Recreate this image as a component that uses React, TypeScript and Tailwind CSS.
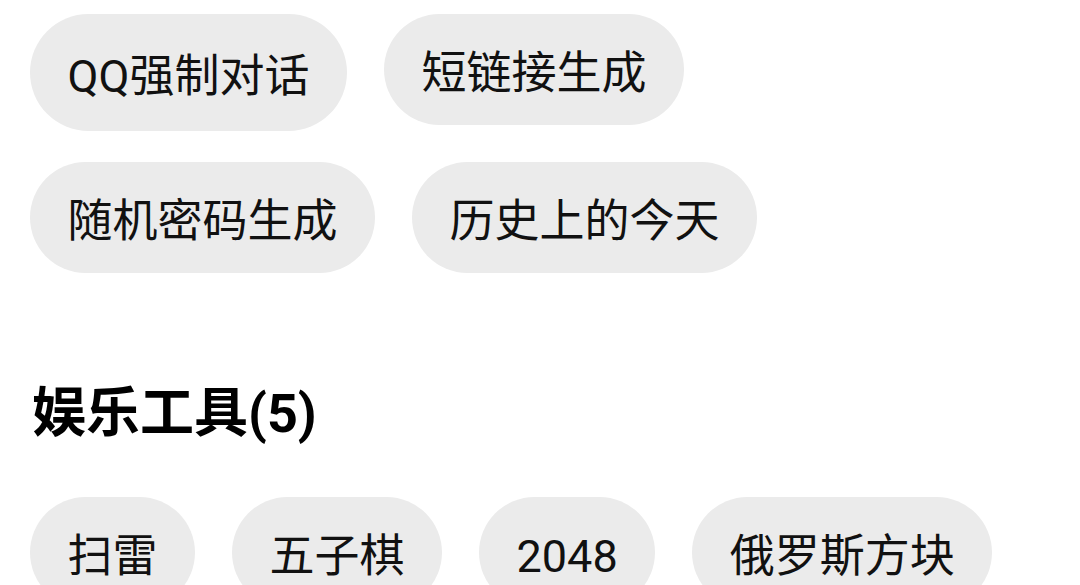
import React from "react";

const font = { fontFamily: "Roboto, 'Noto Sans CJK SC', sans-serif" };

function Pill({ label, tall }: { label: string; tall?: boolean }) {
  return (
    <div
      className={`flex items-center rounded-full bg-[#ebebeb] px-[37.5px] pt-[8px] text-[45px] leading-none text-[#111111] whitespace-nowrap ${
        tall ? "h-[117px]" : "h-[111px]"
      }`}
    >
      {label}
    </div>
  );
}

export default function App() {
  return (
    <div
      className="w-[1080px] h-[585px] overflow-hidden bg-white pl-[30px] pt-[14px]"
      style={font}
    >
      <div className="flex flex-col gap-y-[31px]">
        <div className="flex items-start gap-x-[37px]">
          <Pill label="QQ强制对话" tall />
          <Pill label="短链接生成" />
        </div>
        <div className="flex items-start gap-x-[37px]">
          <Pill label="随机密码生成" />
          <Pill label="历史上的今天" />
        </div>
      </div>
      <h2 className="mt-[108px] h-[66px] leading-[66px] text-[54px] font-bold text-black pl-[2px]">
        娱乐工具(5)
      </h2>
      <div className="mt-[50px] flex items-start gap-x-[37px]">
        <Pill label="扫雷" />
        <Pill label="五子棋" />
        <Pill label="2048" />
        <Pill label="俄罗斯方块" />
      </div>
    </div>
  );
}
